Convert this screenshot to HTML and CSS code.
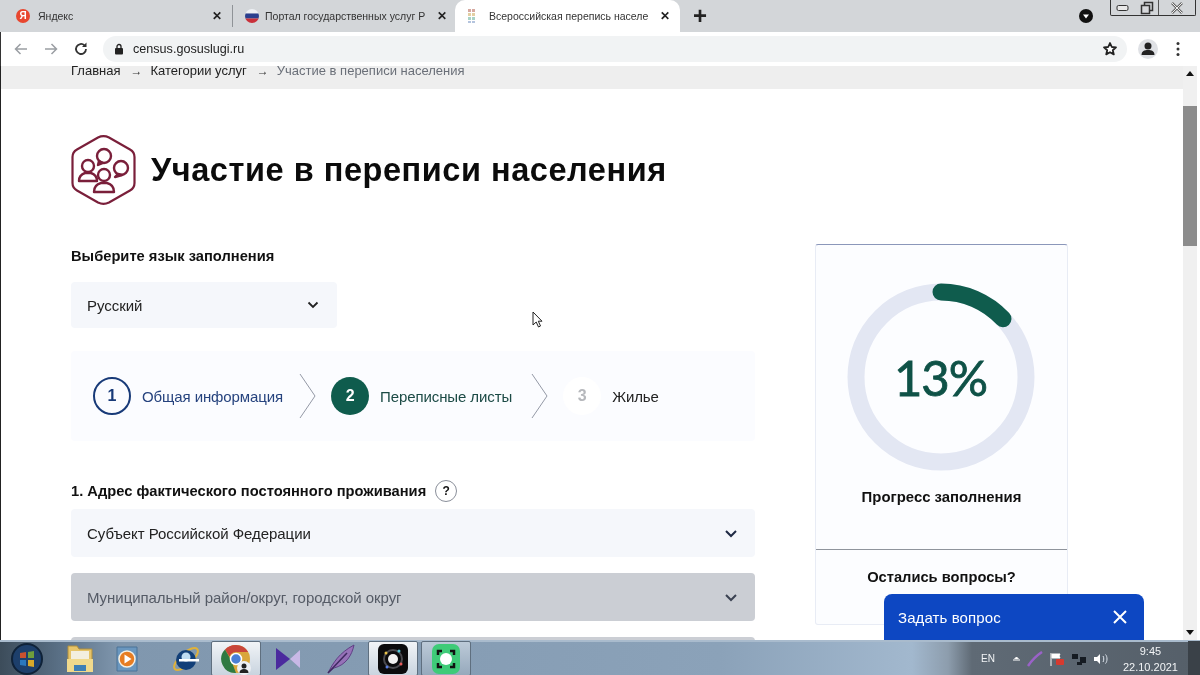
FILE: index.html
```html
<!DOCTYPE html>
<html lang="ru">
<head>
<meta charset="utf-8">
<title>Участие в переписи населения</title>
<link rel="stylesheet" href="styles.css">
</head>
<body>
<div class="screen">
  <div class="tabstrip">
    <div class="tab">
      <span class="ya-logo">Я</span><span class="tab-title">Яндекс</span><span class="tab-x">✕</span>
    </div>
    <div class="tab-sep"></div>
    <div class="tab tab-second">
      <svg class="flag" width="16" height="16" viewBox="0 0 16 16"><clipPath id="fc"><circle cx="8" cy="8" r="7"/></clipPath><g clip-path="url(#fc)"><rect width="16" height="5.500" fill="#eef0f4"/><rect y="5.500" width="16" height="5" fill="#2b3f8e"/><rect y="10.500" width="16" height="5.500" fill="#c9303a"/></g></svg>
      <span class="tab-title">Портал государственных услуг Р</span><span class="tab-x">✕</span>
    </div>
    <div class="tab tab-active">
      <svg class="grid-fav" width="12" height="16" viewBox="0 0 12 16"><g fill="#d6a9a0"><rect x="1" y="1" width="3" height="3"/><rect x="5" y="1" width="3" height="3"/></g><g fill="#e3cfa2"><rect x="1" y="5" width="3" height="3"/><rect x="5" y="5" width="3" height="3"/></g><g fill="#a9d3c6"><rect x="1" y="9" width="3" height="3"/><rect x="5" y="9" width="3" height="3"/></g><g fill="#b4c4de"><rect x="1" y="13" width="3" height="2"/><rect x="5" y="13" width="3" height="2"/></g></svg>
      <span class="tab-title">Всероссийская перепись населе</span><span class="tab-x">✕</span>
    </div>
    <span class="new-tab">+</span>
    <div class="strip-right">
      <svg class="drop-btn" width="16" height="16" viewBox="0 0 16 16"><circle cx="8" cy="8" r="7" fill="#111"/><path d="M5 6.500h6L8 10.500z" fill="#fff"/></svg>
      <div class="winbtns">
        <span class="winbtn win-min"><svg width="14" height="8" viewBox="0 0 14 8"><rect x="1" y="1.500" width="11" height="5" rx="1.500" fill="#e8e8e8" stroke="#333"/></svg></span>
        <span class="winbtn win-max"><svg width="14" height="14" viewBox="0 0 14 14"><rect x="4.500" y="1.500" width="8" height="8" fill="none" stroke="#333" stroke-width="1.500"/><rect x="1.500" y="4.500" width="8" height="8" fill="#d6d8db" stroke="#333" stroke-width="1.500"/></svg></span>
        <span class="winbtn win-close"><svg width="14" height="14" viewBox="0 0 14 14"><path d="M2 2l10 10M12 2L2 12" stroke="#666" stroke-width="2.500"/><path d="M2 2l10 10M12 2L2 12" stroke="#eee" stroke-width="1"/></svg></span>
      </div>
    </div>
  </div>

  <div class="toolbar">
    <svg class="nav-ico" width="16" height="16" viewBox="0 0 16 16"><path d="M14 8H2.500M7.500 3l-5 5 5 5" fill="none" stroke="#9a9ea3" stroke-width="1.500"/></svg>
    <svg class="nav-ico" width="16" height="16" viewBox="0 0 16 16"><path d="M2 8h11.500M8.500 3l5 5-5 5" fill="none" stroke="#9a9ea3" stroke-width="1.500"/></svg>
    <svg class="nav-ico" width="16" height="16" viewBox="0 0 16 16"><path d="M13 8a5 5 0 1 1-1.500-3.600" fill="none" stroke="#333" stroke-width="1.800"/><path d="M13.500 1.500v4.500H9z" fill="#333"/></svg>
    <div class="omnibox">
      <svg width="10" height="12" viewBox="0 0 10 12"><rect x="1" y="5" width="8" height="6.500" rx="1" fill="#222"/><path d="M3 5.500V3.500a2 2 0 0 1 4 0v2" fill="none" stroke="#222" stroke-width="1.300"/></svg>
      <span class="url">census.gosuslugi.ru</span>
      <svg class="star" width="16" height="16" viewBox="0 0 16 16"><path d="M8 2l1.800 4 4.200.4-3.200 2.800 1 4.200L8 11.200 4.200 13.400l1-4.200L2 6.400 6.200 6z" fill="#fff" stroke="#222" stroke-width="1.800" stroke-linejoin="round"/></svg>
    </div>
    <span class="avatar"><svg width="18" height="18" viewBox="0 0 18 18"><circle cx="9" cy="6" r="3.500" fill="#222"/><path d="M2.500 15c0-4 3-5 6.500-5s6.500 1 6.500 5z" fill="#222"/></svg></span>
    <svg class="kebab" width="4" height="16" viewBox="0 0 4 16"><circle cx="2" cy="2.500" r="1.500" fill="#333"/><circle cx="2" cy="8" r="1.500" fill="#333"/><circle cx="2" cy="13.500" r="1.500" fill="#333"/></svg>
  </div>

  <div class="viewport">
    <div class="page">
      <div class="breadcrumbs">
        <span class="crumb">Главная</span><span class="crumb-arrow">→</span><span class="crumb">Категории услуг</span><span class="crumb-arrow">→</span><span class="crumb crumb-current">Участие в переписи населения</span>
      </div>
      <div class="content">
        <div class="main-col">
          <div class="heading">
            <svg class="hex" width="65" height="72" viewBox="0 0 65 72">
              <path d="M27 3.500Q32.500 .8 38 3.500L59 15.500Q63.500 18 63.500 23V49Q63.500 54 59 56.500L38 68.500Q32.500 71.200 27 68.500L6 56.500Q1.500 54 1.500 49V23Q1.500 18 6 15.500z" fill="none" stroke="#7a1f3a" stroke-width="2.200"/>
              <g fill="#fff" stroke="#7a1f3a" stroke-width="2.400" stroke-linejoin="round">
                <circle cx="33" cy="22" r="7"/><path d="M28 27l-1 4 5-2z"/>
                <circle cx="50" cy="34" r="7"/><path d="M47 40l-3 3 7-2z"/>
                <circle cx="17" cy="32" r="6"/><path d="M8 47c0-5 3-7 6-8h6c3 1 6 3 6 8z"/>
                <circle cx="33" cy="41" r="6"/><path d="M23 58c0-6 3-8 7-9h6c4 1 7 3 7 9z"/>
              </g>
            </svg>
            <h1 class="title">Участие в переписи населения</h1>
          </div>
          <div class="lang-label">Выберите язык заполнения</div>
          <div class="field lang-select">
            <span>Русский</span>
            <svg width="12" height="8" viewBox="0 0 12 8"><path d="M1.500 1.500 6 6l4.500-4.500" fill="none" stroke="#222" stroke-width="1.800"/></svg>
          </div>
          <div class="stepper">
            <span class="step-num step-blue">1</span><span class="step-text step-text-blue">Общая информация</span>
            <svg class="step-div" width="18" height="46" viewBox="0 0 18 46"><path d="M1 1l15 22L1 45" fill="none" stroke="#9499a6"/></svg>
            <span class="step-num step-green">2</span><span class="step-text step-text-green">Переписные листы</span>
            <svg class="step-div" width="18" height="46" viewBox="0 0 18 46"><path d="M1 1l15 22L1 45" fill="none" stroke="#9499a6"/></svg>
            <span class="step-num step-grey">3</span><span class="step-text">Жилье</span>
          </div>
          <div class="addr-label">
            <span>1. Адрес фактического постоянного проживания</span><span class="help">?</span>
          </div>
          <div class="field">
            <span>Субъект Российской Федерации</span>
            <svg width="14" height="9" viewBox="0 0 14 9"><path d="M2 2l5 5 5-5" fill="none" stroke="#1f2a44" stroke-width="2"/></svg>
          </div>
          <div class="field field-disabled">
            <span>Муниципальный район/округ, городской округ</span>
            <svg width="14" height="9" viewBox="0 0 14 9"><path d="M2 2l5 5 5-5" fill="none" stroke="#3b4252" stroke-width="2"/></svg>
          </div>
          <div class="field field-disabled"></div>
        </div>
        <aside class="side-card">
          <div class="progress">
            <div class="ring">
              <svg width="188" height="188" viewBox="0 0 188 188">
                <circle cx="94" cy="94" r="85" fill="none" stroke="#e3e7f3" stroke-width="17"/>
                <path d="M94 9A85 85 0 0 1 156 35.800" fill="none" stroke="#0f5c4d" stroke-width="17" stroke-linecap="round"/>
              </svg>
              <span class="ring-value">13%</span>
            </div>
            <div class="progress-label">Прогресс заполнения</div>
          </div>
          <div class="questions">Остались вопросы?</div>
        </aside>
      </div>
    </div>
    <div class="scrollbar">
      <svg width="8" height="5" viewBox="0 0 8 5"><path d="M0 5l4-5 4 5z" fill="#111"/></svg>
      <div class="scroll-thumb"></div>
      <svg class="scroll-down" width="8" height="5" viewBox="0 0 8 5"><path d="M0 0l4 5 4-5z" fill="#111"/></svg>
    </div>
    <svg class="cursor" width="12" height="18" viewBox="0 0 12 18"><path d="M1 1v13l3.200-3 2.300 5 2-1-2.200-4.800H10z" fill="#fff" stroke="#222"/></svg>
    <div class="ask">
      <span>Задать вопрос</span>
      <svg width="16" height="16" viewBox="0 0 16 16"><path d="M2 2l12 12M14 2L2 14" stroke="#fff" stroke-width="2"/></svg>
    </div>
  </div>

  <div class="taskbar">
    <span class="tb-item tb-start"><svg width="36" height="36" viewBox="0 0 36 36"><circle cx="18" cy="18" r="15" fill="#1d3f6b"/><circle cx="18" cy="18" r="15" fill="none" stroke="#0f2238" stroke-width="2"/><path d="M11 12l6-1v6h-6z" fill="#c9512f"/><path d="M19 11l6-1v7h-6z" fill="#6f9e3c"/><path d="M11 19h6v6l-6-1z" fill="#2b78bd"/><path d="M19 19h6v7l-6-1z" fill="#d8a92a"/></svg></span>
    <span class="tb-item tb-folder"><svg width="30" height="34" viewBox="0 0 30 34"><path d="M3 4h9l2 3h13v22H3z" fill="#e6c46a" stroke="#b08f3c"/><rect x="6" y="9" width="18" height="10" fill="#f3efe0"/><path d="M2 17h26v13H2z" fill="#f0d98c"/><path d="M9 23h12v6H9z" fill="#3e7fb5"/></svg></span>
    <span class="tb-item tb-media"><svg width="26" height="30" viewBox="0 0 26 30"><path d="M3 3h20v24H3z" fill="#6a97bf" stroke="#4a7397"/><circle cx="13" cy="15" r="8" fill="#e77d22" stroke="#f5f0e4" stroke-width="1.500"/><path d="M10.500 10.500l7 4.500-7 4.500z" fill="#fff"/></svg></span>
    <span class="tb-item tb-ie"><svg width="32" height="32" viewBox="0 0 32 32"><ellipse cx="16" cy="16" rx="15" ry="6" fill="none" stroke="#e0b23a" stroke-width="2" transform="rotate(-42 16 16)"/><circle cx="16" cy="17" r="10" fill="#123f78"/><circle cx="16" cy="14" r="4.500" fill="#bfdcf2"/><rect x="9" y="16" width="20" height="2.500" fill="#fff"/></svg></span>
    <span class="tb-box tb-chrome"><svg width="32" height="32" viewBox="0 0 32 32"><circle cx="16" cy="16" r="14" fill="#d9a63b"/><path d="M16 2a14 14 0 0 1 12.100 7H16a7 7 0 0 0-6.500 4.500L5 6.500A14 14 0 0 1 16 2z" fill="#c9463a"/><path d="M5 6.500l6 10.500 5 13A14 14 0 0 1 5 6.500z" fill="#2f7a42"/><circle cx="16" cy="16" r="5.500" fill="#4a7fd6" stroke="#fff" stroke-width="1.500"/><circle cx="24" cy="25" r="7" fill="#eceff3"/><circle cx="24" cy="23" r="2.500" fill="#222"/><path d="M19.500 30c0-3 2-4 4.500-4s4.500 1 4.500 4z" fill="#222"/></svg></span>
    <span class="tb-item tb-vs"><svg width="26" height="26" viewBox="0 0 26 26"><path d="M1 2v22l14-11z" fill="#4b2a9e"/><path d="M25 4v18l-10-9z" fill="#c8b8e6"/></svg></span>
    <span class="tb-item tb-feather"><svg width="32" height="32" viewBox="0 0 32 32"><path d="M3 30C8 20 14 10 29 2c-2 10-8 20-20 23z" fill="#9672b8" stroke="#5f3f85"/><path d="M3 30L22 10" stroke="#3f2a60" stroke-width="1.500"/></svg></span>
    <span class="tb-box tb-dark"><svg width="30" height="30" viewBox="0 0 30 30"><rect width="30" height="30" rx="6" fill="#0b0b0d"/><circle cx="15" cy="15" r="9" fill="none" stroke="#4a4a50" stroke-width="2"/><circle cx="15" cy="15" r="5" fill="#f1f1f1"/><circle cx="8" cy="9" r="1.500" fill="#e7c14a"/><circle cx="21" cy="7" r="1.500" fill="#52c7d8"/><circle cx="23" cy="20" r="1.500" fill="#e65b5b"/><circle cx="9" cy="23" r="1.500" fill="#5b7fe6"/></svg></span>
    <span class="tb-box tb-green"><svg width="28" height="30" viewBox="0 0 28 30"><rect width="28" height="30" rx="7" fill="#3ecb78"/><circle cx="14" cy="15" r="6" fill="#fff"/><path d="M6 11V7h4M18 7h4v4M22 19v4h-4M10 23H6v-4" fill="none" stroke="#111" stroke-width="2.500"/></svg></span>
    <div class="tray">
      <span class="tray-lang">EN</span>
      <svg width="9" height="6" viewBox="0 0 9 6"><path d="M1 4h7M2.500 3 4.500 1l2 2" stroke="#fff" fill="#fff"/></svg>
      <svg width="16" height="16" viewBox="0 0 16 16"><path d="M1 15C5 9 9 5 15 1" stroke="#9a62c8" stroke-width="2.500" fill="none"/></svg>
      <svg width="16" height="16" viewBox="0 0 16 16"><path d="M2 2v13M3 3h8l-1 2 1 2H3z" stroke="#fff" fill="#fff"/><rect x="7" y="8" width="8" height="6" rx="1" fill="#d63a2f"/></svg>
      <svg width="16" height="16" viewBox="0 0 16 16"><path d="M1 3h6v5H1zM9 6h6v6H9zM6 11h5v3H6z" fill="#151b22"/></svg>
      <svg width="16" height="16" viewBox="0 0 16 16"><path d="M1 6h3l3-3v10l-3-3H1z" fill="#fff"/><path d="M10 5c1 1 1 5 0 6M12.500 3.500c2 2 2 7 0 9" stroke="#dfe6ee" fill="none"/></svg>
      <div class="clock"><span>9:45</span><span>22.10.2021</span></div>
    </div>
    <span class="show-desktop"></span>
  </div>
</div>
</body>
</html>
```

FILE: styles.css
```css
* { box-sizing: border-box; }
html, body { margin: 0; padding: 0; width: 1200px; height: 675px; overflow: hidden; }
body { font-family: "Liberation Sans", Arial, sans-serif; color: #111; background: #fff; }
.screen { width: 1200px; height: 675px; display: flex; flex-direction: column; overflow: hidden; filter: blur(0.4px); }

/* browser tab strip */
.tabstrip { height: 32px; flex: none; background: #d3d6d9; display: flex; align-items: center; font-size: 10.5px; color: #333; }
.tab { height: 32px; display: flex; align-items: center; flex: none; }
.tab:first-child { width: 232px; padding: 0 10px 0 16px; }
.ya-logo { width: 14px; height: 14px; border-radius: 50%; background: #e8472f; color: #fff; font-size: 10px; font-weight: bold; text-align: center; line-height: 14px; margin-right: 8px; flex: none; }
.tab-title { flex: 1; white-space: nowrap; overflow: hidden; }
.tab-x { font-size: 12px; font-weight: bold; color: #222; margin-left: 6px; flex: none; }
.tab-sep { width: 1px; height: 22px; background: #8f9397; flex: none; }
.tab-second { width: 222px; padding: 0 8px 0 11px; }
.flag { margin-right: 5px; flex: none; }
.tab-active { width: 225px; background: #fff; border-radius: 10px 10px 0 0; padding: 0 10px 0 12px; }
.grid-fav { margin-right: 10px; flex: none; }
.new-tab { font-size: 24px; font-weight: bold; color: #222; margin-left: 13px; line-height: 32px; }
.strip-right { margin-left: auto; display: flex; align-items: flex-start; height: 32px; padding-right: 4px; }
.drop-btn { margin: 8px 16px 0 0; }
.winbtns { display: flex; height: 16px; border: 1px solid #333; border-top: 0; border-radius: 0 0 2px 2px; }
.winbtn { display: flex; align-items: center; justify-content: center; }
.win-min { width: 24px; }
.win-max { width: 24px; border-right: 1px solid #555; }
.win-close { width: 36px; }

/* toolbar */
.toolbar { height: 34px; flex: none; background: #fff; border-left: 1px solid #333; display: flex; align-items: center; padding: 0 20px 0 12px; }
.nav-ico { flex: none; margin-right: 14px; }
.omnibox { flex: 1; height: 26px; margin-right: 11px; background: #f1f3f4; border-radius: 13px; display: flex; align-items: center; padding: 0 9px 0 11px; }
.url { margin-left: 9px; font-size: 12.6px; color: #222; }
.star { margin-left: auto; }
.avatar { width: 20px; height: 20px; border-radius: 50%; background: #dfe1e5; display: flex; align-items: center; justify-content: center; margin-right: 18px; flex: none; }
.kebab { flex: none; }

/* page viewport */
.viewport { flex: 1; min-height: 0; position: relative; display: flex; background: #fff; border-left: 1px solid #222; overflow: hidden; }
.page { flex: 1; min-width: 0; overflow: hidden; }
.breadcrumbs { height: 23px; background: #eeeeee; display: flex; align-items: flex-start; padding-left: 70px; font-size: 13px; line-height: 10px; color: #222; }
.crumb { white-space: nowrap; }
.crumb-current { color: #6a6f78; }
.crumb-arrow { margin: 0 8px 0 10px; color: #333; font-size: 12px; font-weight: bold; }
.content { display: flex; align-items: flex-start; padding: 45px 0 0 70px; }
.main-col { width: 684px; flex: none; }
.heading { display: flex; align-items: center; gap: 15px; }
.hex { flex: none; }
.title { margin: 0; font-size: 32.5px; font-weight: bold; color: #0b0b0b; letter-spacing: 0.55px; white-space: nowrap; }
.lang-label { margin-top: 41px; font-size: 14.7px; font-weight: bold; line-height: 18px; }
.field { height: 48px; background: #f5f7fb; border-radius: 4px; display: flex; align-items: center; justify-content: space-between; padding: 0 17px 0 16px; font-size: 15px; letter-spacing: -0.05px; color: #222; margin-bottom: 16px; }
.lang-select { width: 266px; height: 46px; margin-top: 17px; margin-bottom: 23px; padding-right: 18px; }
.field-disabled { background: #cbced4; color: #555b66; }
.stepper { height: 90px; background: #fbfcff; border-radius: 4px; display: flex; align-items: center; padding-left: 22px; font-size: 15px; color: #222; }
.step-num { width: 38px; height: 38px; border-radius: 50%; display: flex; align-items: center; justify-content: center; font-size: 16px; font-weight: bold; flex: none; }
.step-blue { border: 2px solid #183a78; color: #183a78; }
.step-green { background: #0f5c4d; color: #fff; }
.step-grey { background: #fff; color: #b6b8bc; }
.step-text { margin-left: 11px; padding-top: 1px; white-space: nowrap; letter-spacing: -0.1px; }
.step-text-blue { color: #26437e; }
.step-text-green { color: #1b4a45; margin-right: 3px; }
.step-div { flex: none; margin: 0 14px 0 16px; }
.addr-label { margin-top: 38px; height: 24px; display: flex; align-items: center; gap: 9px; font-size: 14.7px; font-weight: bold; margin-bottom: 6px; }
.help { width: 22px; height: 22px; border: 1px solid #8a8f9a; border-radius: 50%; display: flex; align-items: center; justify-content: center; font-size: 12px; font-weight: bold; background: #fff; }
.side-card { width: 253px; height: 381px; flex: none; margin: 110px 0 0 60px; background: #fcfdff; border: 1px solid #e8ecf5; border-top: 1px solid #8b97ba; border-radius: 3px; display: flex; flex-direction: column; }
.progress { height: 305px; border-bottom: 1px solid #8f949c; display: flex; flex-direction: column; align-items: center; padding-top: 38px; }
.ring { width: 188px; height: 188px; margin-right: 2px; position: relative; display: flex; align-items: center; justify-content: center; }
.ring svg { position: absolute; inset: 0; }
.ring-value { position: relative; font-family: Lato, "Liberation Sans", sans-serif; font-size: 49px; letter-spacing: -1px; color: #0f5247; font-weight: 400; -webkit-text-stroke: 0.8px #0f5247; }
.progress-label { margin-top: 18px; font-size: 14.9px; font-weight: bold; }
.questions { text-align: center; font-size: 14.7px; font-weight: bold; margin-top: 19px; }
.scrollbar { width: 14px; margin-right: 3px; background: #f0f0f0; display: flex; flex-direction: column; align-items: center; flex: none; padding-top: 5px; }
.scroll-thumb { width: 14px; height: 140px; background: #8c8c8c; margin-top: 30px; }
.scroll-down { margin-top: auto; margin-bottom: 5px; }
.cursor { position: absolute; left: 531px; top: 245px; }
.ask { position: absolute; left: 883px; bottom: 0; width: 260px; height: 46px; background: #0d47c2; border-radius: 8px 8px 0 0; color: #fff; font-size: 15px; letter-spacing: 0.1px; display: flex; align-items: center; justify-content: space-between; padding: 0 16px 0 14px; }

/* taskbar */
.taskbar { height: 35px; flex: none; display: flex; align-items: center; background: linear-gradient(90deg, #3c4c5a 0%, #5a7086 5%, #8097ae 10%, #8ba2b9 60%, #a2b8ce 76%, #8d9dad 79%, #5f6a75 81%, #555f69 100%); border-top: 2px solid #a9bbcd; position: relative; }
.tb-item { display: flex; align-items: center; justify-content: center; flex: none; }
.tb-start { width: 54px; }
.tb-folder { width: 52px; }
.tb-media { width: 42px; }
.tb-ie { width: 62px; padding-left: 14px; }
.tb-box { height: 35px; flex: none; display: flex; align-items: center; justify-content: center; background: linear-gradient(180deg, #f1f4f7, #c9d4df); border: 1px solid #5f6f7f; border-radius: 2px; }
.tb-chrome { width: 50px; margin-left: 1px; }
.tb-vs { width: 54px; }
.tb-feather { width: 52px; }
.tb-dark { width: 50px; margin-left: 1px; }
.tb-green { width: 50px; margin-left: 3px; background: linear-gradient(180deg, #bccad8, #96a9bc); }
.tray { margin-left: auto; display: flex; align-items: center; gap: 6px; color: #f2f4f6; font-size: 11px; padding-right: 10px; }
.tray-lang { margin-right: 11px; font-size: 10px; }
.clock { display: flex; flex-direction: column; align-items: center; line-height: 16px; margin-left: 8px; }
.show-desktop { width: 12px; height: 35px; background: #3a4148; flex: none; }
```
